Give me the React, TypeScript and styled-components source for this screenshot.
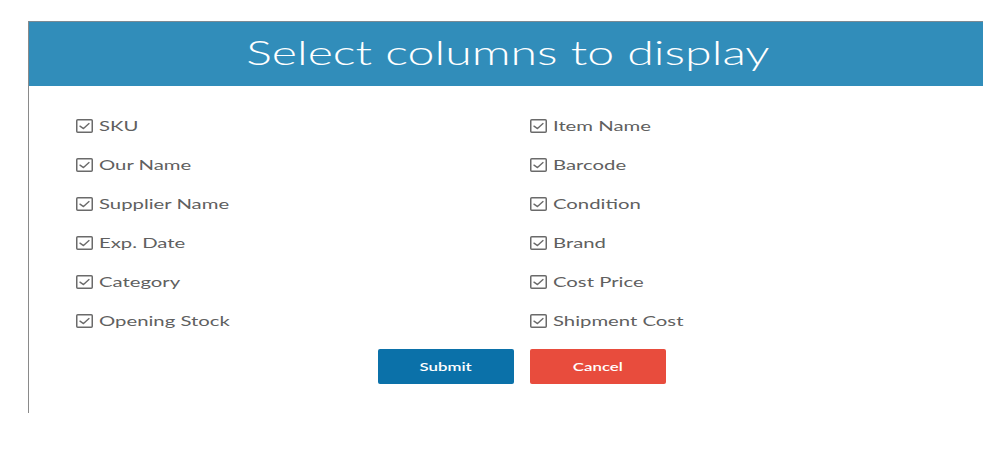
import React from "react";
import styled, { createGlobalStyle } from "styled-components";

const Global = createGlobalStyle`
  html, body { margin: 0; padding: 0; background: #ffffff; }
  body { font-family: Lato, "Open Sans", sans-serif; }
`;

const Card = styled.div`
  margin: 21px 0 0 28px;
  width: 955px;
  height: 392px;
  border-left: 1px solid #8a8a8a;
  border-top: 1px solid #7a8a94;
  box-sizing: border-box;
  display: flex;
  flex-direction: column;
`;

const Header = styled.div`
  height: 64px;
  background: #318dba;
  display: flex;
  align-items: center;
  justify-content: center;
  overflow: hidden;
`;

const Title = styled.h1`
  margin: 0;
  font-family: Lato, sans-serif;
  font-weight: 300;
  font-size: 34px;
  line-height: 1;
  color: #ffffff;
  display: inline-block;
  transform: scaleX(1.42);
  transform-origin: center;
  padding: 0 0 4px 3px;
  white-space: nowrap;
`;

const Body = styled.div`
  padding: 20px 0 0 47px;
`;

const Grid = styled.div`
  display: grid;
  grid-template-columns: 454px 1fr;
  grid-auto-rows: 39px;
`;

const Item = styled.label`
  display: flex;
  align-items: center;
  gap: 6px;
  color: #606060;
`;

const Box = styled.svg`
  width: 17px;
  height: 14px;
  flex: none;
`;

const Label = styled.span`
  display: inline-block;
  font-family: Lato, sans-serif;
  font-size: 14px;
  transform: scaleX(1.45);
  transform-origin: left center;
  white-space: nowrap;
`;

const Actions = styled.div`
  display: flex;
  gap: 16px;
  padding: 9px 0 0 302px;
`;

const Button = styled.button<{ $variant: "primary" | "danger" }>`
  width: 136px;
  height: 35px;
  border: none;
  border-radius: 2px;
  background: ${(p) => (p.$variant === "primary" ? "#0b71a9" : "#e84c3d")};
  color: #ffffff;
  display: flex;
  align-items: center;
  justify-content: center;
  cursor: pointer;
  padding: 0;
`;

const ButtonText = styled.span`
  display: inline-block;
  font-family: Lato, sans-serif;
  font-size: 12px;
  font-weight: 600;
  transform: scaleX(1.4);
`;

const CheckIcon = () => (
  <Box viewBox="0 0 17 14">
    <rect x="0.75" y="0.75" width="15.5" height="12.5" rx="1" fill="none" stroke="#6a6a6a" strokeWidth="1.5" />
    <path d="M4 7.2 L7.5 9.6 L13 4.6" fill="none" stroke="#6a6a6a" strokeWidth="1.4" strokeLinecap="round" strokeLinejoin="round" />
  </Box>
);

const columns = [
  "SKU",
  "Item Name",
  "Our Name",
  "Barcode",
  "Supplier Name",
  "Condition",
  "Exp. Date",
  "Brand",
  "Category",
  "Cost Price",
  "Opening Stock",
  "Shipment Cost",
];

export default function App() {
  return (
    <>
      <Global />
      <Card>
        <Header>
          <Title>Select columns to display</Title>
        </Header>
        <Body>
          <Grid>
            {columns.map((c) => (
              <Item key={c}>
                <CheckIcon />
                <Label>{c}</Label>
              </Item>
            ))}
          </Grid>
          <Actions>
            <Button $variant="primary">
              <ButtonText>Submit</ButtonText>
            </Button>
            <Button $variant="danger">
              <ButtonText>Cancel</ButtonText>
            </Button>
          </Actions>
        </Body>
      </Card>
    </>
  );
}
